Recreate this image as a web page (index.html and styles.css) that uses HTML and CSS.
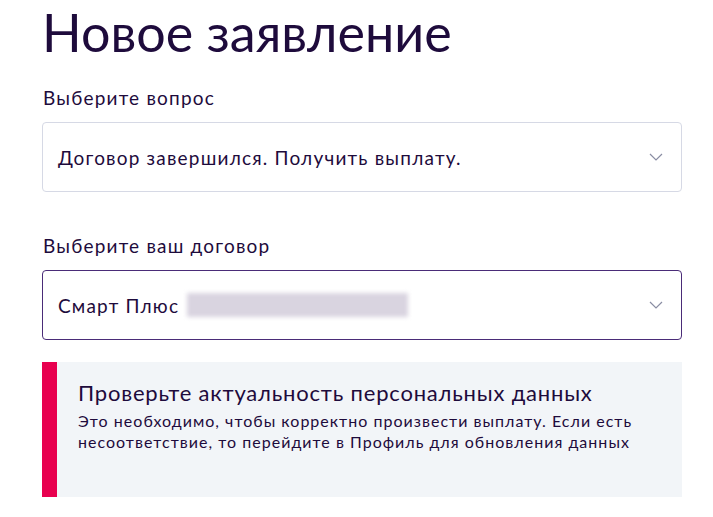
FILE: index.html
```html
<!DOCTYPE html>
<html lang="ru">
<head>
<meta charset="utf-8">
<link rel="stylesheet" href="styles.css">
</head>
<body>
<main class="page">
  <h1 class="title">Новое заявление</h1>
  <div class="field">
    <div class="label">Выберите вопрос</div>
    <div class="select">
      <span class="value">Договор завершился. Получить выплату.</span>
      <svg class="chev" width="14" height="8" viewBox="0 0 14 8"><path d="M1 1l6 6 6-6" fill="none" stroke="#8a8da3" stroke-width="1.2"/></svg>
    </div>
  </div>
  <div class="field">
    <div class="label">Выберите ваш договор</div>
    <div class="select active">
      <span class="value">Смарт Плюс</span>
      <span class="blur"></span>
      <svg class="chev" width="14" height="8" viewBox="0 0 14 8"><path d="M1 1l6 6 6-6" fill="none" stroke="#8a8da3" stroke-width="1.2"/></svg>
    </div>
  </div>
  <div class="notice">
    <div class="notice-title">Проверьте актуальность персональных данных</div>
    <div class="notice-text">Это необходимо, чтобы корректно произвести выплату. Если есть несоответствие, то перейдите в Профиль для обновления данных</div>
  </div>
</main>
</body>
</html>
```
FILE: styles.css
```css
html, body { margin: 0; padding: 0; background: #fff; }
body { font-family: Lato, sans-serif; color: #1e0b3c; }
.page { padding: 0 31px 0 42px; width: 640px; }
.title { margin: 0; font-size: 52px; font-weight: 400; line-height: 64px; }
.field { margin-top: 22px; }
.field + .field { margin-top: 42px; }
.label { font-size: 19px; line-height: 24px; margin-left: 1px; letter-spacing: 1.2px; }
.select { margin-top: 12px; border: 1px solid #d6d9e5; border-radius: 4px; display: flex; align-items: center; padding: 0 18px 0 15px; box-sizing: border-box; height: 70px; }
.select.active { border-color: #4a2c78; }
.value { font-size: 19px; letter-spacing: 1.2px; }
.blur { margin-left: 8px; width: 221px; height: 24px; background: #d9d4e0; filter: blur(2px); }
.chev { margin-left: auto; }
.notice { margin-top: 22px; background: #f2f5f8; border-left: 15px solid #e8004f; padding: 17px 30px 30px 21px; height: 135px; box-sizing: border-box; }
.notice-title { font-size: 22px; line-height: 28px; letter-spacing: 0.8px; }
.notice-text { font-size: 16px; line-height: 21px; margin-top: 3px; letter-spacing: 1.02px; }
```
